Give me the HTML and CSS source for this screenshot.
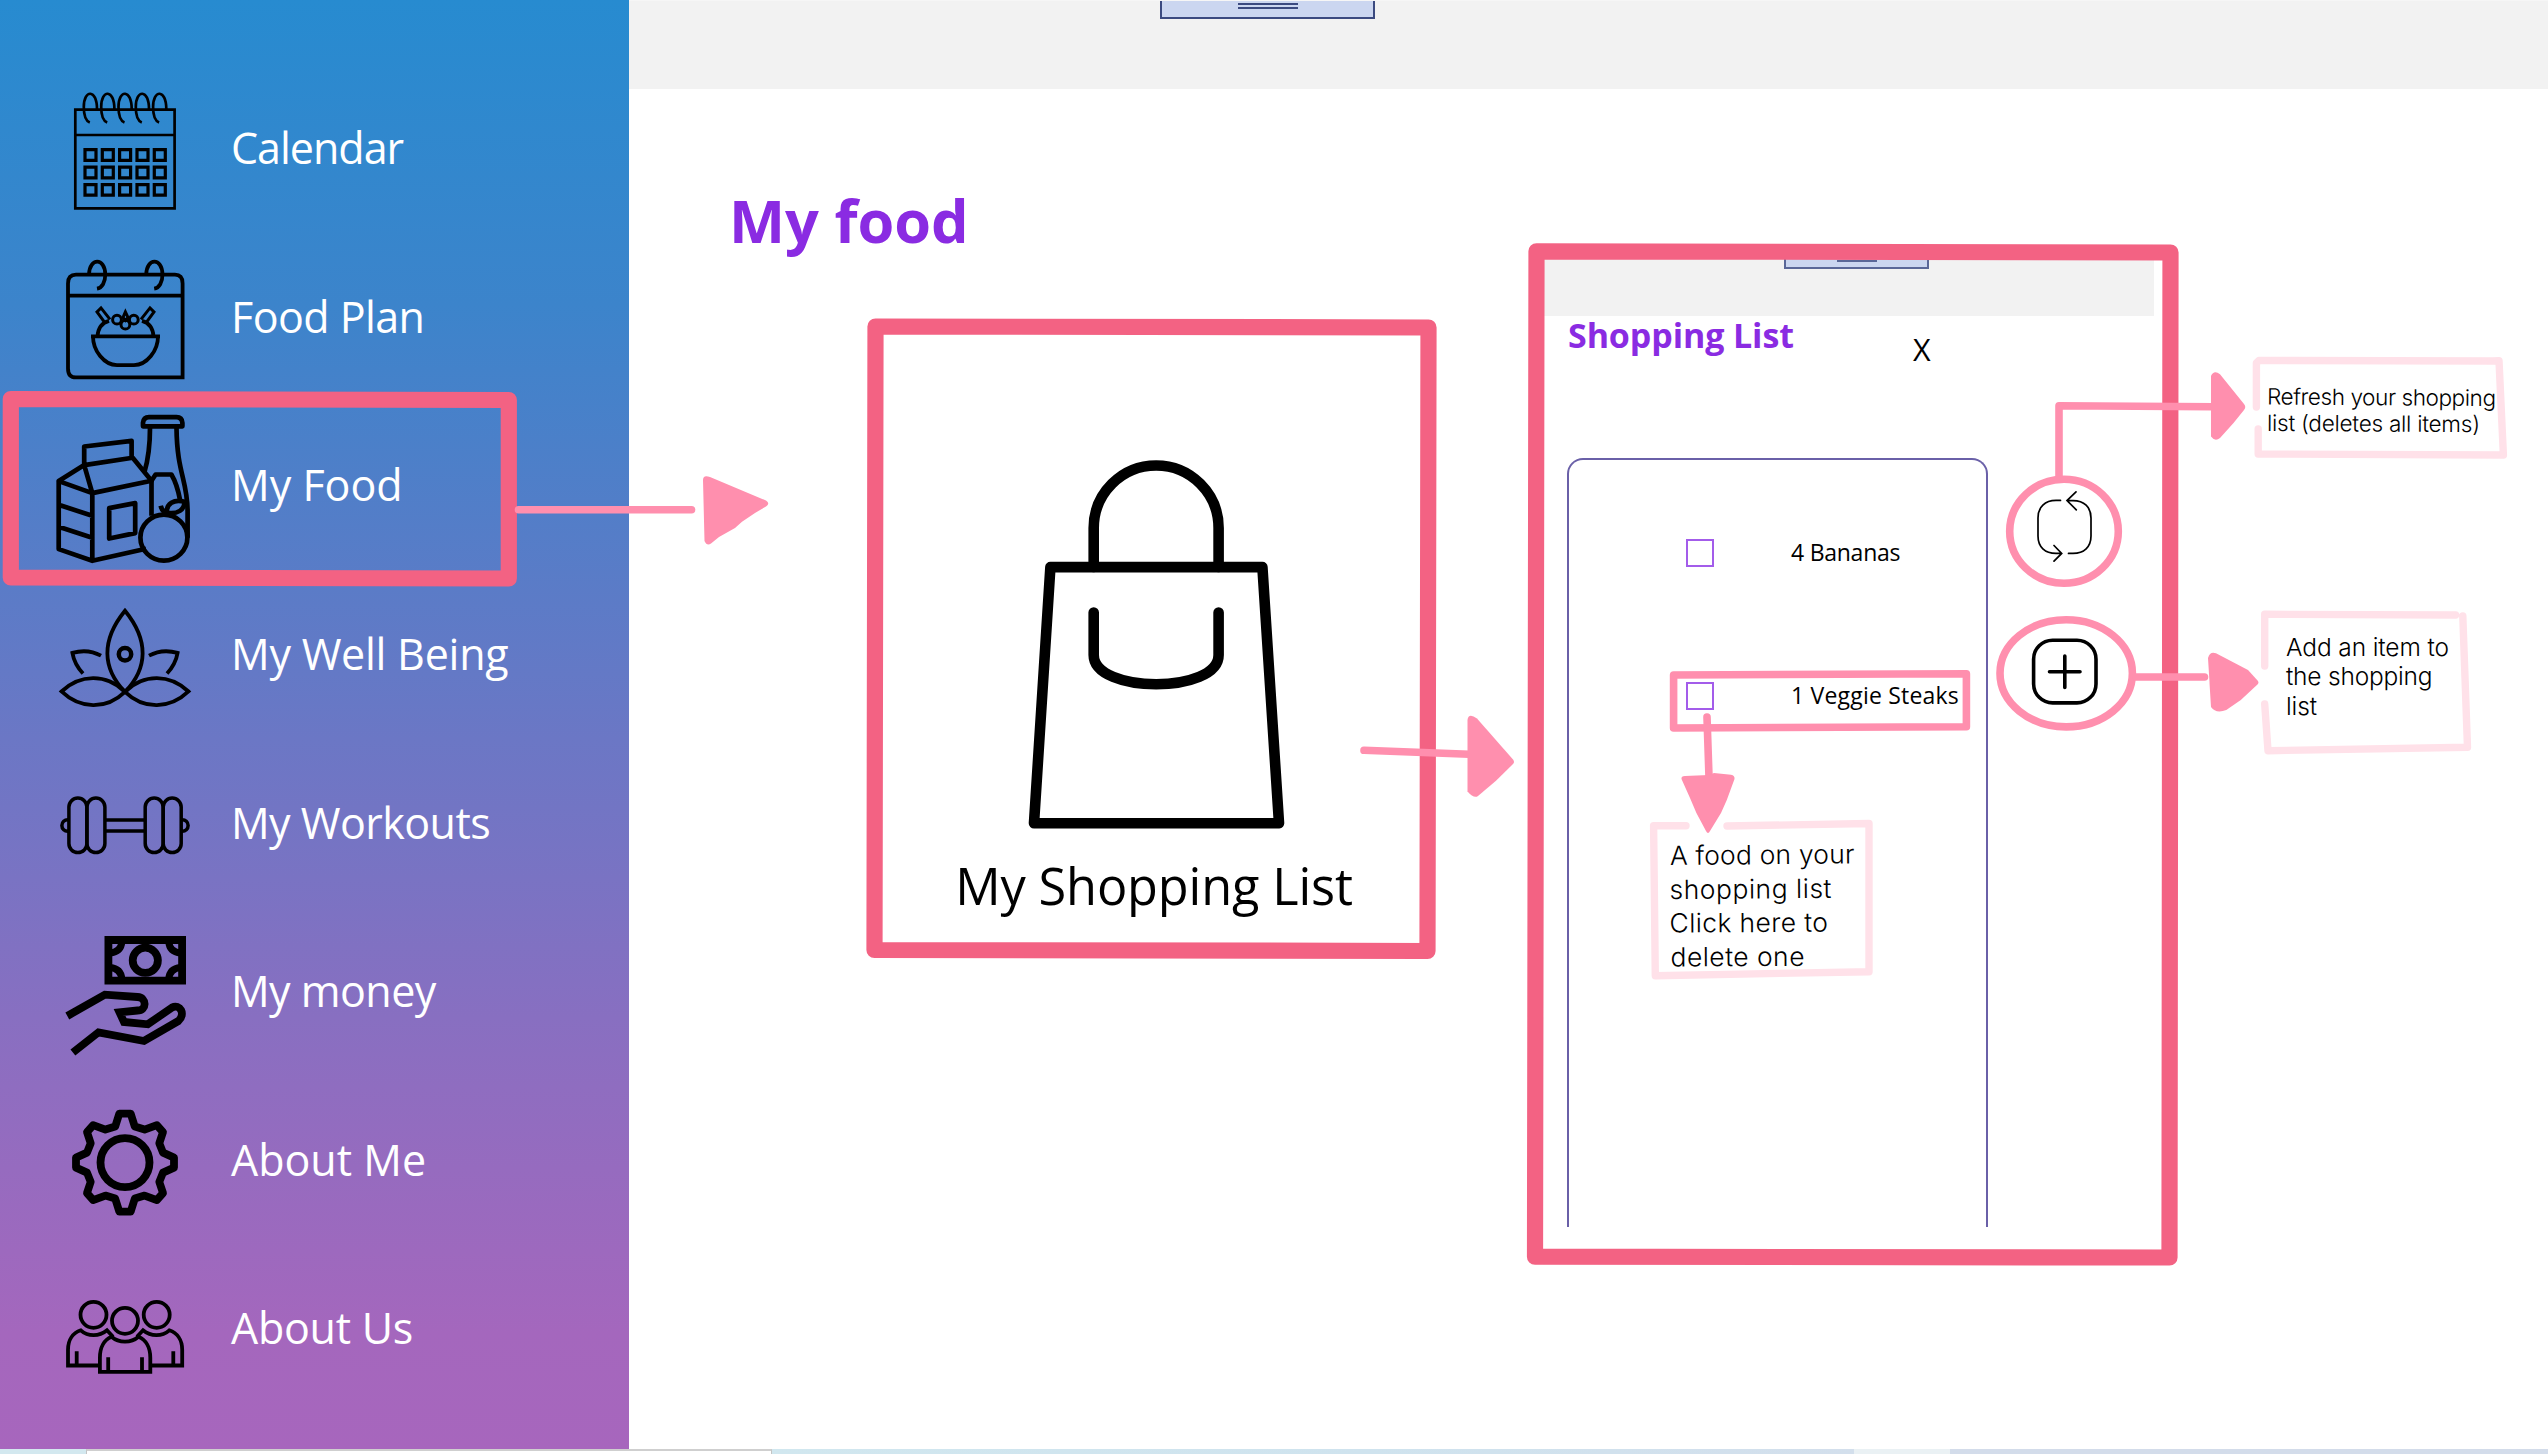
FILE: index.html
```html
<!DOCTYPE html>
<html lang="en">
<head>
<meta charset="utf-8">
<title>My food</title>
<link rel="stylesheet" href="styles.css">
</head>
<body>
<div class="app">
  <nav class="sidebar">
    <a class="nav-item">
      <svg class="nav-icon" viewBox="0 65 230 168.6" stroke-width="2.7">
        <path d="M75.3 109.6H174.6V208.4H75.3ZM75.3 135H174.6"/>
        <path d="M97 109C97 89 83.8 89 83.8 107C83.8 115 86 121 89.8 122.4"/>
        <path d="M114.4 109C114.4 89 101.2 89 101.2 107C101.2 115 103.4 121 107.2 122.4"/>
        <path d="M131.7 109C131.7 89 118.5 89 118.5 107C118.5 115 120.7 121 124.5 122.4"/>
        <path d="M149 109C149 89 135.8 89 135.8 107C135.8 115 138 121 141.8 122.4"/>
        <path d="M166.3 109C166.3 89 153.1 89 153.1 107C153.1 115 155.3 121 159.1 122.4"/>
        <g stroke-width="3.2">
          <path d="M85 149.7h11v10.6h-11zM102.3 149.7h11v10.6h-11zM119.6 149.7h11v10.6h-11zM137 149.7h11v10.6h-11zM154.3 149.7h11v10.6h-11z"/>
          <path d="M85 167.2h11v10.6h-11zM102.3 167.2h11v10.6h-11zM119.6 167.2h11v10.6h-11zM137 167.2h11v10.6h-11zM154.3 167.2h11v10.6h-11z"/>
          <path d="M85 184.6h11v10.6h-11zM102.3 184.6h11v10.6h-11zM119.6 184.6h11v10.6h-11zM137 184.6h11v10.6h-11zM154.3 184.6h11v10.6h-11z"/>
        </g>
      </svg>
      <span class="nav-label tight">Calendar</span>
    </a>
    <a class="nav-item">
      <svg class="nav-icon" viewBox="0 233.6 230 168.6" stroke-width="3.8">
        <path d="M76 274.3H175Q182.6 274.3 182.6 283V377H76Q68 377 68 368V283Q68 274.3 76 274.3ZM68 295.3H182.6"/>
        <path d="M89 274C89.5 257 105 257 105.3 274C105.3 282 102 287.5 97 288.3M146.2 274C146.7 257 162.2 257 162.5 274C162.5 282 159.2 287.5 154.2 288.3"/>
        <path d="M91 336H160M93 336C93 350 104 364.7 117 364.7H134C147 364.7 158 350 158 336M97.5 336C98 328 102 322.5 109 320.5M153.5 336C153 328 149 322.5 142 320.5"/>
        <g stroke-width="3">
          <path d="M110 319L101 307.5L97 311.5L105 322.5M141 319L150 307.5L154 311.5L146 322.5"/>
          <circle cx="117" cy="319.3" r="4.4"/><circle cx="133.8" cy="319.3" r="4.4"/><circle cx="125.4" cy="324.3" r="4.4"/>
          <path d="M125.4 311.5L123 317L125.4 320L128 317Z"/>
        </g>
      </svg>
      <span class="nav-label">Food Plan</span>
    </a>
    <a class="nav-item">
      <svg class="nav-icon" viewBox="0 402.2 230 168.6" stroke-width="4.7" stroke-linejoin="round">
        <path d="M143 426.5V423Q143.5 417.3 149 417.3H176.5Q182 417.3 182.4 423V426.5Z"/>
        <path d="M150 428C150 446 147.5 462 144.5 472M176.5 428C177 474 187.6 480 187.6 512V538M151.5 516V481L155.6 474.7H171.4Q177 484 180 500"/>
        <path d="M84.2 465.3V446.7L131.6 441V458M58.7 481.3L84.2 465.3L132.7 458L151.5 481L92.3 493.3ZM84.2 465.3L92.3 493.3M58.7 481.3V549.3L92.3 561L146 549M92.3 493.3V561M58.7 505L92.3 516M58.7 527L92.3 538M109.2 508.3L135.2 503.3V533.3L109.2 538.7Z"/>
        <ellipse cx="163.9" cy="537.8" rx="23.5" ry="23"/>
        <path d="M160.7 506Q162 512 167 513C166 504 174 499 184.5 502C184.5 510 178 514.5 167 513"/>
      </svg>
      <span class="nav-label loose">My Food</span>
    </a>
    <a class="nav-item">
      <svg class="nav-icon" viewBox="0 570.8 230 168.6" stroke-width="3.8">
        <path d="M125 610.5C101 640 102 668 125 691.7C148 668 149 640 125 610.5Z"/>
        <ellipse cx="125" cy="654" rx="6.2" ry="6.2" stroke-width="4.5"/>
        <path d="M125 691.7C106 673 80 674 61.5 691.3C80 709 106 710 125 691.7C144 710 170 709 188.5 691.3C170 674 144 673 125 691.7"/>
        <path d="M101 655.5C92 650.5 82 650 72.4 652.7C74 662 78 668 83 673.3M149 655.5C158 650.5 168 650 177.6 652.7C176 662 172 668 167 673.3"/>
      </svg>
      <span class="nav-label medium">My Well Being</span>
    </a>
    <a class="nav-item">
      <svg class="nav-icon" viewBox="0 739.4 230 168.6" stroke-width="3.5">
        <rect x="68.9" y="798.5" width="18" height="54.5" rx="9"/>
        <rect x="86.9" y="798.5" width="18" height="54.5" rx="9"/>
        <rect x="145.2" y="798.5" width="18" height="54.5" rx="9"/>
        <rect x="163.2" y="798.5" width="18" height="54.5" rx="9"/>
        <path d="M105 820.3H145M105 831.3H145M69 820.3C59.5 819 59.5 833 69 831.5M181 820.3C190.5 819 190.5 833 181 831.5"/>
      </svg>
      <span class="nav-label">My Workouts</span>
    </a>
    <a class="nav-item">
      <svg class="nav-icon" viewBox="0 908 230 168.6" stroke-width="7.8">
        <path d="M108.4 940H182.1V980.7H108.4Z"/>
        <circle cx="145.3" cy="960.3" r="12.6"/>
        <path stroke-width="7" d="M121.8 942Q121 952 110 953M168.8 942Q169.6 952 180.5 953M121.8 979Q121 968.5 110 967.5M168.8 979Q169.6 968.5 180.5 967.5"/>
        <path d="M67.3 1016L104.9 994.7L137.5 997C147 997.5 147 1010.5 137.5 1010.5L119.5 1012.3L124 1022L147.8 1024.3L172 1007.5C180 1003.5 186 1014 178.4 1021L144 1041L98.5 1032.3L72.9 1052.5"/>
      </svg>
      <span class="nav-label">My money</span>
    </a>
    <a class="nav-item">
      <svg class="nav-icon" viewBox="0 1076.6 230 168.6" stroke-width="7.8" stroke-linejoin="round">
        <circle cx="125" cy="1162.2" r="24.5"/>
        <path transform="translate(125 1162.2)" d="M-5.7-49H5.7L9.8-36L19.6-33L31.8-37.5L38-30.5L34.3-19.3L38-10L49-5V5L38 10L34.3 19.3L38 30.5L31.8 37.5L19.6 33L9.8 36L5.7 49H-5.7L-9.8 36L-19.6 33L-31.8 37.5L-38 30.5L-34.3 19.3L-38 10L-49 5V-5L-38-10L-34.3-19.3L-38-30.5L-31.8-37.5L-19.6-33L-9.8-36Z"/>
      </svg>
      <span class="nav-label loose">About Me</span>
    </a>
    <a class="nav-item">
      <svg class="nav-icon" viewBox="0 1245.2 230 168.6" stroke-width="3.8">
        <ellipse cx="93.5" cy="1315" rx="13" ry="13"/>
        <ellipse cx="125" cy="1321" rx="13" ry="13"/>
        <ellipse cx="156.7" cy="1315" rx="13" ry="13"/>
        <path d="M101 1365.7H68V1350C68 1340 73 1333 80.8 1330.5C88 1337 99 1337 107 1330.5L113 1337M76.7 1351.5V1365M149 1365.7H182.2V1350C182.2 1340 177 1333 169.3 1330.5C162 1337 151 1337 143 1330.5L137 1337M173.3 1351.5V1365"/>
        <path d="M99.9 1372V1358C99.9 1348 104 1340 111.5 1337C119 1343.5 131 1343.5 138.5 1337C146 1340 150.3 1348 150.3 1358V1372ZM108.2 1357.5V1372M142 1357.5V1372"/>
      </svg>
      <span class="nav-label medium">About Us</span>
    </a>
  </nav>

  <main class="main">
    <header class="topbar"><div class="tab"><i></i><i></i></div></header>
    <div class="content">
      <section class="food">
        <h1 class="page-title">My food</h1>
        <figure class="card">
          <svg class="bag" viewBox="1020 450 272 390" stroke-width="10.6" stroke-linejoin="round" stroke-linecap="round">
            <path d="M1050.4 567.1H1262.4L1279 823.2H1034Z"/>
            <path d="M1093.7 567V528A62.45 62.45 0 0 1 1218.6 528V567M1093.7 612.5V655C1093.7 694 1218.6 694 1218.6 655V612.5"/>
          </svg>
          <figcaption class="card-label">My Shopping List</figcaption>
        </figure>
      </section>
      <section class="panel">
        <div class="panel-bar"><div class="tab tab-small"><i></i></div></div>
        <div class="panel-head">
          <h2 class="panel-title">Shopping List</h2>
          <span class="close">X</span>
        </div>
        <div class="panel-body">
          <ul class="list">
            <li class="row"><span class="check"></span><span class="item">4 Bananas</span></li>
            <li class="row row-wide"><span class="check"></span><span class="item">1 Veggie Steaks</span></li>
          </ul>
          <div class="tools">
            <svg class="tool" viewBox="2030 485 70 80" stroke-width="1.7" stroke-linecap="round">
              <path d="M2060.5 500.4H2056C2045 500.4 2038 507 2038 518V536C2038 547 2045 553.4 2056 553.4H2061.5M2054 545.5L2061.7 553.4L2054 561.2M2068.5 553.4H2073C2084 553.4 2091 547 2091 536V518C2091 507 2084 500.6 2073 500.6H2067M2076 491.9L2067 500.6L2076.3 509.8"/>
            </svg>
            <svg class="tool tool-add" viewBox="2030 632 70 80" stroke-width="3.6" stroke-linecap="round">
              <rect x="2033.6" y="640.2" width="62.4" height="62.7" rx="19"/>
              <path d="M2049.5 671.7H2080M2064.8 656V687.5"/>
            </svg>
          </div>
        </div>
      </section>
    </div>
  </main>
</div>

<footer class="taskbar">
  <span class="seg seg-a"></span><span class="seg seg-window"></span><span class="seg seg-b"></span><span class="seg seg-c"></span><span class="seg seg-d"></span>
</footer>

<svg class="notes" viewBox="0 0 2548 1454">
  <g class="frame">
    <path d="M10.8 399L508.8 400V578.5L10.8 577.5Z"/>
    <path d="M875.5 326.5L1428.5 327.5L1427.5 951L874.5 950Z"/>
    <path d="M1536.5 251.3L2170.5 252.5L2169.5 1257.5L1535 1256.7Z"/>
  </g>
  <g class="stroke">
    <path d="M518.5 509.7H691.5"/>
    <path d="M1364 750.3L1469 754.3"/>
    <path d="M2059 476V405.8L2213 406.7"/>
    <ellipse cx="2064" cy="531.3" rx="54.3" ry="52"/>
    <ellipse cx="2066.2" cy="673.3" rx="66.2" ry="53.6"/>
    <path d="M2136 677H2204.5"/>
    <path d="M1673.6 675L1966.4 673.7V726.7L1673.6 728Z"/>
    <path d="M1707 717L1709 777"/>
  </g>
  <g class="head">
    <path d="M703 480Q703 474.5 710 477L766 500.5Q770.5 503.5 766 506.5L755 513L742 521.7L735 528L719 537L711 543.5Q707 546.5 704.5 541Z"/>
    <path d="M1467.5 720Q1468.5 712.5 1477 718.6L1513 759.5Q1515 762 1513 764L1496 780.7L1478 796Q1474 799 1467.5 791.5Z"/>
    <path d="M2211 376Q2214 369.5 2220 374.3L2244 404Q2246.5 407 2244 410L2233.5 423L2220 438Q2215 442 2211 436.5Z"/>
    <path d="M2208 658Q2210 651 2216 653.3L2248 670L2258 681Q2259 682.7 2258 684L2240.8 700L2226.3 710Q2216 714 2211 707Z"/>
    <path d="M1681.5 779Q1681 776 1685 776L1709 775L1714 773L1731 774.7Q1735 775.5 1734.5 779L1726.8 800L1721 813L1710 831Q1708 835 1706 831L1696.4 813L1690 798Z"/>
  </g>
  <g class="bubble">
    <path d="M2256.4 407V363L2259 360.5L2493 361L2499 360.7L2503.4 455L2258.2 454V429"/>
    <path d="M2264.7 666V614.3L2455.6 615M2462.8 616L2467.5 747.3L2268 750.7L2264.7 704"/>
    <path d="M1686 825.7H1653.6L1655.3 975.7L1869 971.7V823.5L1727 826"/>
  </g>
  <g class="note-text">
    <text x="2267" y="404.5" font-size="22.5" textLength="229" transform="rotate(.4 2268 404)">Refresh your shopping</text>
    <text x="2267" y="431" font-size="22.5" textLength="213" transform="rotate(.3 2268 431)">list (deletes all items)</text>
    <text x="2286" y="655.5" font-size="24.5" textLength="163">Add an item to</text>
    <text x="2286" y="685.3" font-size="24.5" textLength="146.5">the shopping</text>
    <text x="2286" y="715" font-size="24.5" textLength="31">list</text>
    <text x="1670" y="865" font-size="26.5" textLength="184.5" transform="rotate(-.5 1670 865)">A food on your</text>
    <text x="1669.5" y="899" font-size="26.5" textLength="162" transform="rotate(-.4 1670 899)">shopping list</text>
    <text x="1669.5" y="932.5" font-size="26.5" textLength="158.5" transform="rotate(-.3 1670 932)">Click here to</text>
    <text x="1670.5" y="966.5" font-size="26.5" textLength="134" transform="rotate(-.3 1670 966)">delete one</text>
  </g>
</svg>
</body>
</html>
```

FILE: styles.css
```css
* { box-sizing: border-box; margin: 0; padding: 0; }

body {
  width: 2548px;
  height: 1454px;
  overflow: hidden;
  background: #fff;
  color: #000;
  font-family: "Open Sans", "Noto Sans", sans-serif;
}

svg { fill: none; stroke: #000; display: block; }

.app { display: flex; height: 1449px; }

/* Sidebar */
.sidebar {
  flex: none;
  width: 629px;
  padding-top: 65px;
  background: linear-gradient(#278bd0 0%, #3c84cb 21%, #6b77c5 51%, #8f6dc0 75%, #a467bd 92%, #a766bd 100%);
}
.nav-item { display: flex; align-items: center; height: 168.6px; }
.nav-icon { flex: none; width: 230px; height: 168.6px; }
.nav-label {
  margin-left: 1px;
  padding-bottom: 3px;
  color: #fff;
  font-size: 43px;
  line-height: 1;
  letter-spacing: -0.55px;
  white-space: nowrap;
}
.nav-label.tight { letter-spacing: -1px; }
.nav-label.medium { letter-spacing: -0.25px; }
.nav-label.loose { letter-spacing: 0; }

/* Main area */
.main { flex: 1; }
.topbar {
  display: flex;
  height: 89px;
  padding-left: 531px;
  background: #f2f2f2;
  border-top: 1px solid #f6f6f6;
}
.tab {
  display: flex;
  flex-direction: column;
  align-items: center;
  gap: 2px;
  width: 215px;
  height: 18px;
  padding-top: 2px;
  background: #cbd6f0;
  border: 2px solid #3b4a80;
  border-top: 0;
}
.tab i { width: 60px; height: 2px; background: #3b4a80; }

.content { display: flex; align-items: flex-start; }
.food { width: 907px; padding: 91px 0 0 100px; }
.page-title {
  color: #8a2be2;
  font-size: 59.5px;
  line-height: 80px;
  font-weight: 700;
  letter-spacing: 0;
}
.card { width: 562px; margin: 190px 0 0 146px; }
.bag { width: 272px; height: 390px; margin: 0 auto; }
.card-label {
  margin-top: 16px;
  padding-right: 4px;
  font-size: 50.5px;
  line-height: 60px;
  letter-spacing: -0.15px;
  text-align: center;
  white-space: nowrap;
}

/* Shopping list panel */
.panel { width: 634px; height: 1005px; margin-top: 163px; }
.panel-bar {
  width: 610px;
  height: 64px;
  margin-left: 8px;
  padding-left: 240px;
  background: #f2f2f2;
}
.tab-small { width: 145px; height: 17px; padding-top: 8px; border-color: #5a6798; }
.tab-small i { width: 40px; background: #5a6798; }
.panel-head {
  display: flex;
  align-items: flex-start;
  height: 142px;
  padding-left: 32px;
}
.panel-title {
  width: 345px;
  color: #8a2be2;
  font-size: 34px;
  line-height: 38px;
  font-weight: 700;
  letter-spacing: -0.1px;
}
.close { padding-top: 13px; font-size: 30.5px; line-height: 41px; }
.panel-body { display: flex; padding-left: 31px; }
.list {
  width: 421px;
  height: 769px;
  padding: 79px 0 0 117px;
  list-style: none;
  border: 2px solid #6a60a8;
  border-bottom: 0;
  border-radius: 16px 16px 0 0;
}
.row { display: flex; align-items: center; height: 28px; margin-bottom: 115px; }
.check { width: 28px; height: 28px; border: 2px solid #a35cea; }
.item {
  margin-left: 77px;
  padding-bottom: 2px;
  font-size: 23px;
  line-height: 26px;
  letter-spacing: -0.25px;
  white-space: nowrap;
}
.row-wide .item { letter-spacing: 0.2px; }
.tools { display: flex; flex-direction: column; gap: 67px; padding: 27px 0 0 42px; }
.tool { width: 70px; height: 80px; }

/* Strip along the lower edge */
.taskbar { display: flex; height: 5px; }
.seg-a { width: 86px; background: #d3e8ef; }
.seg-window { width: 686px; border: 1px solid #c4c4c4; border-top: 2px solid #cfcfcf; border-bottom: 0; background: #fff; }
.seg-b { width: 1082px; background: linear-gradient(90deg, #d1e7ef, #cfe3ee 55%, #d3dfec); }
.seg-c { width: 96px; background: #eaf1f4; }
.seg-d { flex: 1; background: #d3dcea; }

/* Hand-drawn notes over the screens */
.notes { position: absolute; left: 0; top: 0; width: 2548px; height: 1454px; }
.frame { stroke: #f36283; stroke-width: 16.2; stroke-linejoin: round; }
.stroke { stroke: #ff8fae; stroke-width: 7.6; stroke-linejoin: round; stroke-linecap: round; }
.head { fill: #ff8fae; stroke: none; }
.bubble { stroke: #ffe1e9; stroke-width: 7.4; stroke-linejoin: round; stroke-linecap: round; }
.note-text { fill: #000; stroke: none; font-family: Inter, "Liberation Sans", sans-serif; font-weight: 300; }
```
